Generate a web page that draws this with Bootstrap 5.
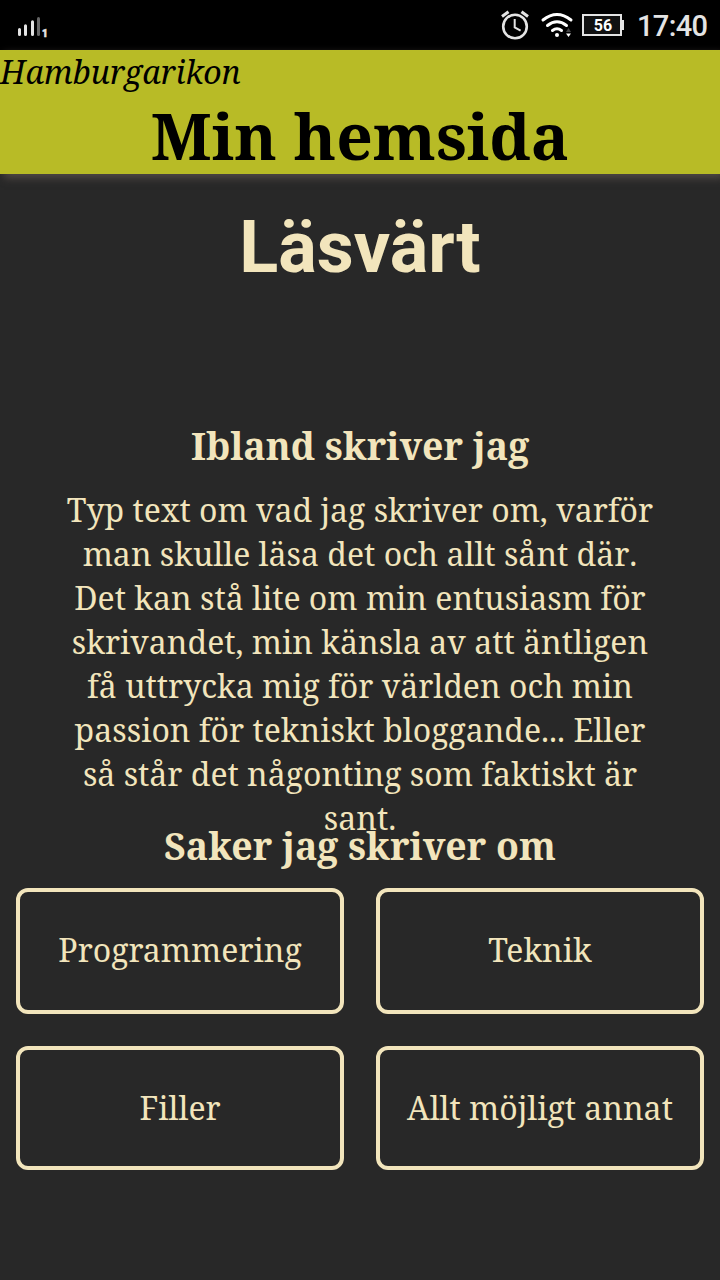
<!DOCTYPE html>
<html lang="sv">
<head>
<meta charset="utf-8">
<meta name="viewport" content="width=device-width, initial-scale=1">
<title>Min hemsida</title>
<link rel="stylesheet" href="https://cdn.jsdelivr.net/npm/bootstrap@5.3.0/dist/css/bootstrap.min.css">
<style>
:root { --cream: #f2e5bc; --ink: #282828; --lime: #b8bb26; }
body { background: var(--ink); color: var(--cream); font-family: "Noto Serif", "DejaVu Serif Condensed", "DejaVu Serif", serif; font-size: 32px; line-height: 44px; min-height: 1280px; }
.status { height: 50px; background: #000; color: #e4e4e4; font-family: Roboto, sans-serif; }
.site-head { height: 124px; background: var(--lime); color: #000; box-shadow: 4px 4px 8px #504945; }
.site-head em { letter-spacing: .05px; }
.site-head h1 { font-size: 64px; line-height: 84px; font-weight: 700; }
.page-title { font: 700 72px/84px Roboto, sans-serif; margin-top: 32px; height: 214px; }
.sub { font-size: 37.44px; line-height: 52px; font-weight: 700; }
.intro { margin-top: 16px; }
.unkerned { font-kerning: none; }
.topics-title { margin-top: -20px; }
.topics { padding: 16px 16px 0; }
.topics .row { --bs-gutter-x: 32px; --bs-gutter-y: 0; row-gap: 32px; }
.tile { border: 4px solid var(--cream); border-radius: 12px; height: 126px; padding-bottom: 2px; }
.tile.low { height: 124px; padding-bottom: 0; }
.ln { white-space: nowrap; }
</style>
</head>
<body>
<div class="status d-flex">
<svg width="720" height="50" viewBox="0 0 720 50" fill="none" stroke="#e4e4e4">
<g stroke-width="3" stroke-linecap="round"><path d="M19.500 29.500v5M25.500 25.800v8.700M32.500 21.800v12.700"/><path d="M38.500 18.500v16" stroke="#666"/></g>
<text x="42" y="37" font-size="10" font-weight="900" fill="#e4e4e4" stroke="#e4e4e4" stroke-width=".5">1</text>
<circle cx="515" cy="26.500" r="11.800" stroke-width="2.600"/>
<path d="M514.700 19v8.300l5.900 3.400" stroke-width="2"/>
<path d="M502 16.500l6.500-4.700M528 16.500l-6.500-4.700" stroke-width="3"/>
<g stroke="#fff" stroke-width="3" stroke-linecap="round"><path d="M543 20q14-11 28 0M547.500 25.500q9.500-7.500 19 0M552.500 30.500q4.500-3.500 9 0"/></g>
<circle cx="557" cy="35" r="2" fill="#fff" stroke="none"/>
<path d="M566 32h5l-2.500-4z" fill="#444" stroke="none"/><path d="M566 33.500h5l-2.500 3.500z" fill="#fff" stroke="none"/>
<rect x="583" y="15" width="38" height="20" stroke-width="2" fill="#111"/><path d="M622.500 20v10" stroke-width="3"/>
<text x="603" y="31.300" text-anchor="middle" font-size="16" font-weight="700" fill="#fff" stroke="none">56</text>
<text x="637" y="36" font-size="29" font-weight="500" fill="#e4e4e4" stroke="none" textLength="71">17:40</text>
</svg>
</div>
<header class="site-head">
<em class="d-block ln">Hamburgarikon</em>
<h1 class="text-center ln mb-0">Min hemsida</h1>
</header>
<main class="text-center">
<h2 class="page-title mb-0">Läsvärt</h2>
<h3 class="sub mb-0 ln">Ibland skriver jag</h3>
<p class="intro mb-0">
<span class="d-block ln">Typ text om vad jag skriver om, varför</span>
<span class="d-block ln unkerned">man skulle läsa det och allt sånt där.</span>
<span class="d-block ln">Det kan stå lite om min entusiasm för</span>
<span class="d-block ln">skrivandet, min känsla av att äntligen</span>
<span class="d-block ln">få uttrycka mig för världen och min</span>
<span class="d-block ln">passion för tekniskt bloggande... Eller</span>
<span class="d-block ln">så står det någonting som faktiskt är</span>
<span class="d-block ln">sant.</span>
</p>
<h3 class="sub topics-title mb-0 ln">Saker jag skriver om</h3>
<div class="topics"><div class="row">
<div class="col-6"><div class="tile d-flex align-items-center justify-content-center ln">Programmering</div></div>
<div class="col-6"><div class="tile d-flex align-items-center justify-content-center ln">Teknik</div></div>
<div class="col-6"><div class="tile low d-flex align-items-center justify-content-center ln">Filler</div></div>
<div class="col-6"><div class="tile low d-flex align-items-center justify-content-center ln">Allt möjligt annat</div></div>
</div></div>
</main>
<script src="https://cdn.jsdelivr.net/npm/bootstrap@5.3.0/dist/js/bootstrap.bundle.min.js"></script>
</body>
</html>
